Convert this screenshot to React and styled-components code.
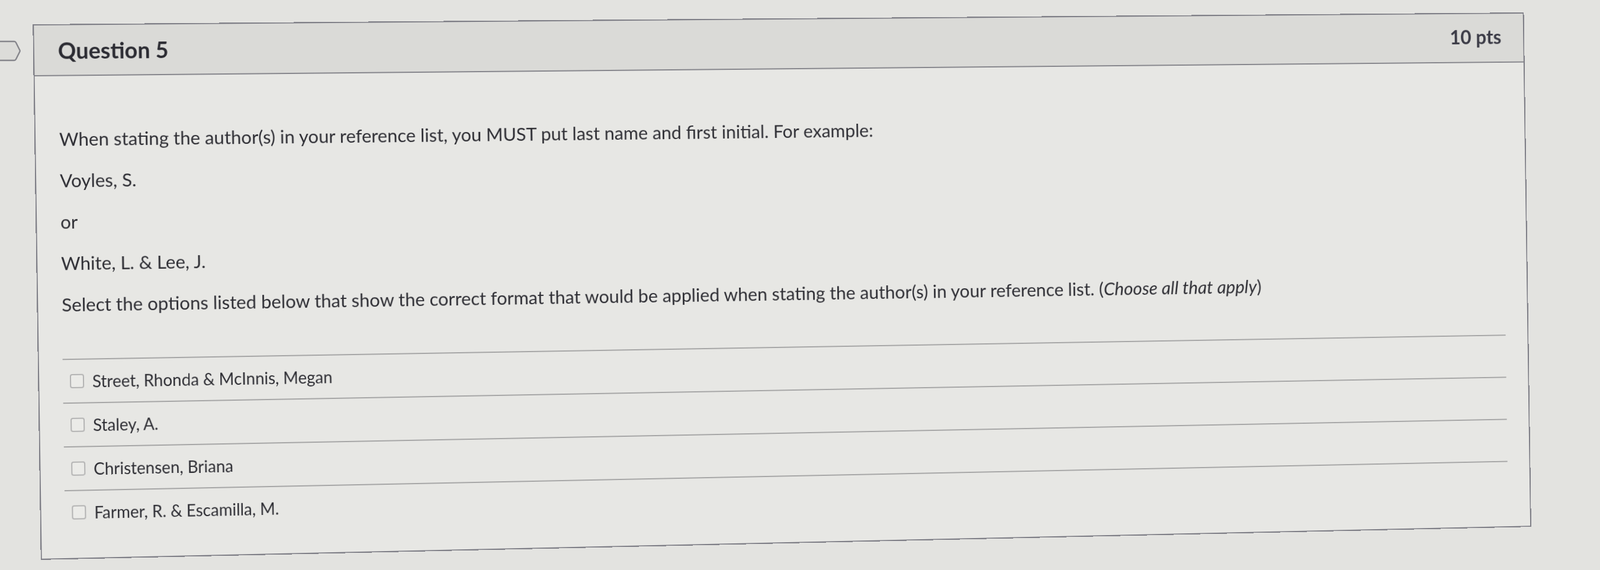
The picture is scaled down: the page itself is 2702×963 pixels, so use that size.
import styled, { createGlobalStyle } from 'styled-components'

const GlobalStyle = createGlobalStyle`
	html, body {
		margin: 0;
		padding: 0;
		background: #e3e3e0;
		overflow: hidden;
	}
	body {
		font-family: Lato, 'Open Sans', 'Liberation Sans', sans-serif;
		color: #2f2f35;
	}
`

const answers = [
	'Street, Rhonda & McInnis, Megan',
	'Staley, A.',
	'Christensen, Briana',
	'Farmer, R. & Escamilla, M.',
]

const Page = styled.div`
	display: flex;
	align-items: flex-start;
	padding-top: 41px;
	height: 963px;
	box-sizing: border-box;
`

const Gutter = styled.div`
	width: 62px;
	flex-shrink: 0;
	padding-top: 27px;
`

const Card = styled.div`
	width: 2623px;
	flex-shrink: 0;
	border: 2px solid #7f7f87;
	background: #e7e7e4;
	transform-origin: 0 50%;
	transform: perspective(4000px) rotateY(3.6deg) rotate(-0.86deg);
`

const Header = styled.div`
	height: 84px;
	display: flex;
	align-items: center;
	justify-content: space-between;
	padding: 0 40px 0 40px;
	background: #dadad7;
	border-bottom: 2px solid #86868c;
`

const Title = styled.h2`
	margin: 0;
	font-size: 38px;
	font-weight: 700;
	color: #2c2c33;
`

const Points = styled.div`
	margin-bottom: 6px;
	font-size: 34px;
	font-weight: 700;
	color: #3c3c47;
`

const Body = styled.div`
	padding: 84px 40px 41px;
`

const QuestionText = styled.div`
	margin-bottom: 70px;

	& p {
		margin: 0 0 26px;
		font-size: 31.5px;
		line-height: 44px;
	}

	& p:last-child {
		margin-bottom: 0;
	}
`

const AnswerList = styled.div`
	border-top: 2px solid #a6a6a6;
`

const AnswerRow = styled.label`
	height: 72px;
	display: flex;
	align-items: center;
	gap: 14px;
	padding-left: 12px;
	border-bottom: 2px solid #a6a6a6;
	font-size: 28px;

	&:last-child {
		border-bottom: none;
	}
`

const Box = styled.span`
	width: 20px;
	height: 20px;
	border: 2px solid #b3b3b3;
	border-radius: 4px;
	background: #ebebe8;
	flex-shrink: 0;
`

const Flag = () => (
	<svg width='36' height='36' viewBox='0 0 36 36'>
		<path
			d='M0 2 H24 Q26 2 27 4 L33.5 17 Q34 18 33.5 19 L27 32 Q26 34 24 34 H0'
			fill='#dcdcd9'
			stroke='#86868c'
			strokeWidth='2.4'
			strokeLinejoin='round'
		/>
	</svg>
)

const App = () => {
	return (
		<>
			<GlobalStyle />
			<Page>
				<Gutter>
					<Flag />
				</Gutter>
				<Card>
					<Header>
						<Title>Question 5</Title>
						<Points>10 pts</Points>
					</Header>
					<Body>
						<QuestionText>
							<p>
								When stating the author(s) in your reference list, you MUST put last name and first
								initial. For example:
							</p>
							<p>Voyles, S.</p>
							<p>or</p>
							<p>White, L. &amp; Lee, J.</p>
							<p>
								Select the options listed below that show the correct format that would be applied when
								stating the author(s) in your reference list. (<em>Choose all that apply</em>)
							</p>
						</QuestionText>
						<AnswerList>
							{answers.map((a) => (
								<AnswerRow key={a}>
									<Box />
									{a}
								</AnswerRow>
							))}
						</AnswerList>
					</Body>
				</Card>
			</Page>
		</>
	)
}

export default App
